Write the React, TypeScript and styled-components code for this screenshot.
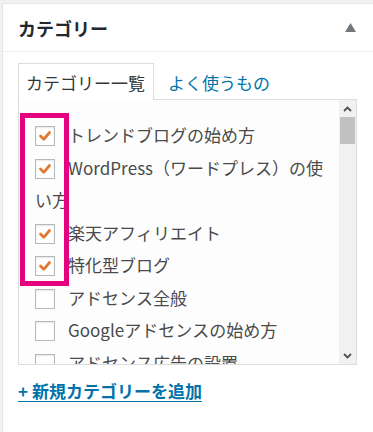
import React from 'react'
import styled, { createGlobalStyle } from 'styled-components'

const GlobalStyle = createGlobalStyle`
  html, body {
    margin: 0;
    padding: 0;
    background: #f1f1f1;
    overflow: hidden;
  }
  body {
    font-family: "Noto Sans CJK JP", "Noto Sans", sans-serif;
    font-kerning: none;
    font-feature-settings: "kern" 0;
  }
`

const Panel = styled.div`
  margin: 3px 0 0 2px;
  width: calc(100vw - 2px);
  height: calc(100vh - 3px);
  background: #fff;
  border: 1px solid #e5e5e5;
  border-right: none;
  border-bottom: none;
  box-sizing: border-box;
`

const Header = styled.div`
  height: 48px;
  display: flex;
  align-items: center;
  justify-content: space-between;
  padding: 0 17px 0 15px;
  box-sizing: border-box;
  border-bottom: 1px solid #eeeeee;
`

const Title = styled.h2`
  margin: 0;
  font-size: 18px;
  font-weight: 700;
  color: #23282d;
  line-height: 1;
`

const Toggle = styled.svg`
  width: 11px;
  height: 9px;
  display: block;
`

const Body = styled.div`
  padding: 11px 0 0 15px;
  width: 339px;
`

const Tabs = styled.div`
  display: flex;
  align-items: stretch;
  height: 36px;
`

const Tab = styled.div<{ $active?: boolean }>`
  display: flex;
  align-items: center;
  padding: 1px 8px 0 7px;
  font-size: 17px;
  box-sizing: border-box;
  color: ${({ $active }) => ($active ? '#32373c' : '#0073aa')};
  border: 1px solid ${({ $active }) => ($active ? '#dddddd' : 'transparent')};
  border-bottom: none;
  background: ${({ $active }) => ($active ? '#fff' : 'transparent')};
  margin-bottom: -1px;
  position: relative;
  z-index: 1;
  ${({ $active }) => (!$active ? 'padding-left: 13px;' : '')}
`

const ListBox = styled.div`
  position: relative;
  display: flex;
  height: 266px;
  border: 1px solid #dddddd;
  box-sizing: border-box;
  background: #fdfdfd;
`

const List = styled.ul`
  flex: 1;
  margin: 0;
  padding: 19px 4px 0 16px;
  list-style: none;
  overflow: hidden;
`

const Item = styled.li`
  font-size: 17px;
  line-height: 32.5px;
  color: #4a4a4a;
`

const Box = styled.span`
  display: inline-block;
  width: 20px;
  height: 20px;
  box-sizing: border-box;
  border: 1px solid #b4b9be;
  background: #fff;
  box-shadow: inset 0 1px 2px rgba(0, 0, 0, 0.1);
  vertical-align: -4px;
  margin-right: 13px;
  position: relative;
`

const Check = styled.svg`
  position: absolute;
  left: 1px;
  top: 1px;
  width: 16px;
  height: 16px;
`

const Scrollbar = styled.div`
  width: 17px;
  background: #f1f1f1;
  display: flex;
  flex-direction: column;
  align-items: center;
`

const Arrow = styled.div`
  height: 17px;
  width: 17px;
  display: flex;
  align-items: center;
  justify-content: center;
`

const Thumb = styled.div`
  width: 15px;
  height: 27px;
  background: #c1c1c1;
`

const Spacer = styled.div`
  flex: 1;
`

const Highlight = styled.div`
  position: absolute;
  left: 1px;
  top: 13px;
  width: 49px;
  height: 173px;
  border: 5px solid #e4007f;
  box-sizing: border-box;
  pointer-events: none;
`

const AddLink = styled.a`
  display: inline-block;
  margin-top: 15px;
  font-size: 17px;
  font-weight: 700;
  color: #0073aa;
  text-decoration: underline;
  text-underline-offset: 3px;
  line-height: 22px;
`

const categories = [
  { name: 'トレンドブログの始め方', checked: true },
  { name: 'WordPress（ワードプレス）の使い方', checked: true },
  { name: '楽天アフィリエイト', checked: true },
  { name: '特化型ブログ', checked: true },
  { name: 'アドセンス全般', checked: false },
  { name: 'Googleアドセンスの始め方', checked: false },
  { name: 'アドセンス広告の設置', checked: false }
]

function Checkbox({ checked }: { checked: boolean }) {
  return (
    <Box>
      {checked && (
        <Check viewBox="0 0 16 16">
          <polyline points="3.5,8 6.8,11.3 12.5,4.5" fill="none" stroke="#e07a33" strokeWidth="2.8" strokeLinecap="round" strokeLinejoin="round" />
        </Check>
      )}
    </Box>
  )
}

export default function App() {
  return (
    <>
      <GlobalStyle />
      <Panel>
        <Header>
          <Title>カテゴリー</Title>
          <Toggle viewBox="0 0 11 9">
            <polygon points="5.5,0 11,9 0,9" fill="#72777c" />
          </Toggle>
        </Header>
        <Body>
          <Tabs>
            <Tab $active>カテゴリー一覧</Tab>
            <Tab>よく使うもの</Tab>
          </Tabs>
          <ListBox>
            <List>
              {categories.map((c) => (
                <Item key={c.name}>
                  <Checkbox checked={c.checked} />
                  {c.name}
                </Item>
              ))}
            </List>
            <Scrollbar>
              <Arrow>
                <svg width="9" height="6" viewBox="0 0 9 6">
                  <polyline points="1,5 4.5,1.5 8,5" fill="none" stroke="#505050" strokeWidth="1.8" />
                </svg>
              </Arrow>
              <Thumb />
              <Spacer />
              <Arrow>
                <svg width="9" height="6" viewBox="0 0 9 6">
                  <polyline points="1,1 4.5,4.5 8,1" fill="none" stroke="#505050" strokeWidth="1.8" />
                </svg>
              </Arrow>
            </Scrollbar>
            <Highlight />
          </ListBox>
          <AddLink href="#">+ 新規カテゴリーを追加</AddLink>
        </Body>
      </Panel>
    </>
  )
}
